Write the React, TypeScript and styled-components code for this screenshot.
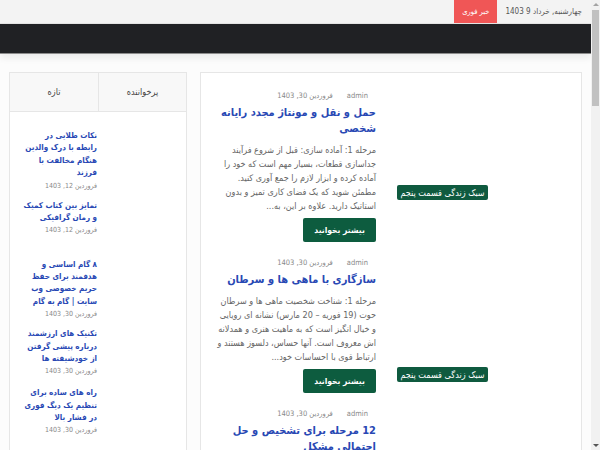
import React from 'react';
import styled, { createGlobalStyle } from 'styled-components';

const GlobalStyle = createGlobalStyle`
  html {
    direction: rtl;
  }
  body {
    margin: 0;
    padding-right: 9px;
    background: #fcfcfc;
    font-family: 'DejaVu Sans Condensed', 'DejaVu Sans', sans-serif;
    font-stretch: condensed;
    color: #555;
  }
`;

const ScrollTrack = styled.div`
  position: fixed;
  top: 0;
  right: 0;
  width: 9px;
  height: 100vh;
  background: #f1f1f1;
  display: flex;
  flex-direction: column;
  align-items: center;
  justify-content: space-between;
`;

const ScrollArrow = styled.span<{ $down?: boolean }>`
  margin: 3px 0;
  width: 0;
  height: 0;
  border-left: 3px solid transparent;
  border-right: 3px solid transparent;
  border-top: ${(p) => (p.$down ? '3px solid #555' : 'none')};
  border-bottom: ${(p) => (p.$down ? 'none' : '3px solid #a3a3a3')};
`;

const ScrollThumb = styled.div`
  position: absolute;
  top: 10px;
  right: 1px;
  width: 7px;
  height: 96px;
  background: #c1c1c1;
`;

const TopBar = styled.div`
  height: 23px;
  background: #f3f3f3;
  border-bottom: 1px solid #e4e4e4;
  display: flex;
  align-items: center;
  gap: 8px;
  padding-right: 9px;
`;

const DateText = styled.span`
  font-size: 8px;
  color: #555;
`;

const Breaking = styled.span`
  height: 23px;
  display: flex;
  align-items: center;
  padding: 0 8px;
  background: #f05656;
  color: #fff;
  font-size: 7.5px;
`;

const NavBar = styled.div`
  height: 29px;
  background: #202124;
  border-bottom: 1px solid #8c8c8c;
  box-shadow: 0 4px 7px rgba(0, 0, 0, 0.07);
`;

const Layout = styled.div`
  display: grid;
  grid-template-columns: 382px 178px;
  gap: 13px;
  padding: 18px 9px 30px;
  align-items: start;
`;

const Card = styled.div`
  background: #fff;
  border: 1px solid #e6e6e6;
`;

const MainCard = styled(Card)`
  padding: 17px 17px 20px 15px;
  display: flex;
  flex-direction: column;
  gap: 15px;
`;

const PostRow = styled.article`
  display: flex;
  gap: 12px;
`;

const Thumb = styled.div<{ $offset: number }>`
  flex: 0 0 176px;
  align-self: flex-end;
  display: flex;
  justify-content: flex-end;
  padding-bottom: ${(p) => p.$offset}px;
`;

const Badge = styled.span`
  flex: 0 0 91px;
  margin-left: 9px;
  height: 15px;
  display: flex;
  align-items: center;
  justify-content: center;
  background: #0f5a3f;
  border-radius: 2px;
  color: #fff;
  font-size: 9px;
  white-space: nowrap;
`;

const PostBody = styled.div`
  flex: 0 0 160px;
  display: flex;
  flex-direction: column;
  align-items: flex-start;
`;

const Meta = styled.div`
  display: flex;
  gap: 14px;
  padding-right: 8px;
  font-size: 7.5px;
  line-height: 12px;
  color: #888;
`;

const PostTitle = styled.h2`
  margin: 3px 0 0;
  font-size: 11px;
  line-height: 16px;
  font-weight: bold;
  color: #2848b4;
`;

const Excerpt = styled.p`
  margin: 6px 0 0;
  font-size: 9px;
  line-height: 14px;
  color: #666;
`;

const ReadMore = styled.button`
  margin-top: 5px;
  width: 73px;
  height: 24px;
  border: none;
  border-radius: 2px;
  background: #0d5c3f;
  color: #fff;
  font-family: inherit;
  font-size: 8.5px;
  font-weight: bold;
`;

const Tabs = styled.div`
  display: grid;
  grid-template-columns: 1fr 1fr;
  background: #f8f8f8;
  border-bottom: 1px solid #e6e6e6;
`;

const Tab = styled.div<{ $first?: boolean }>`
  height: 38px;
  display: flex;
  align-items: center;
  justify-content: center;
  font-size: 9px;
  color: #444;
  border-left: ${(p) => (p.$first ? '1px solid #e6e6e6' : 'none')};
`;

const SideList = styled.div`
  padding: 18px 16px 20px 13px;
  display: flex;
  flex-direction: column;
  gap: 8px;
`;

const SideItem = styled.div`
  display: flex;
  gap: 8px;
  min-height: 51px;
`;

const SideThumb = styled.div`
  width: 65px;
  flex-shrink: 0;
`;

const SideText = styled.div`
  flex: 1;
`;

const SideTitle = styled.div`
  font-size: 8px;
  line-height: 12.4px;
  font-weight: bold;
  color: #2848b4;
`;

const SideDate = styled.div`
  margin-top: 1px;
  font-size: 7px;
  line-height: 11px;
  color: #888;
`;

const posts = [
  {
    title: 'حمل و نقل و مونتاژ مجدد رایانه شخصی',
    excerpt:
      'مرحله 1: آماده سازی: قبل از شروع فرآیند جداسازی قطعات، بسیار مهم است که خود را آماده کرده و ابزار لازم را جمع آوری کنید. مطمئن شوید که یک فضای کاری تمیز و بدون استاتیک دارید. علاوه بر این، به...',
    offset: 42,
  },
  {
    title: 'سازگاری با ماهی ها و سرطان',
    excerpt:
      'مرحله 1: شناخت شخصیت ماهی ها و سرطان حوت (19 فوریه – 20 مارس) نشانه ای رویایی و خیال انگیز است که به ماهیت هنری و همدلانه اش معروف است. آنها حساس، دلسوز هستند و ارتباط قوی با احساسات خود...',
    offset: 11,
  },
  {
    title: '12 مرحله برای تشخیص و حل احتمالی مشکل',
    excerpt:
      'مرحله 1: شناسایی مشکل اولین قدم در حل هر مشکلی، شناسایی دقیق آن است. زمانی را صرف درک ماهیت مشکل کنید و علائم آن را به دقت بررسی کنید تا بتوانید...',
    offset: 11,
  },
  {
    title: 'راهنمای کامل نگهداری از گیاهان آپارتمانی',
    excerpt:
      'مرحله 1: انتخاب گیاه مناسب برای فضای خانه بسیار مهم است. نور، رطوبت و دمای محیط را در نظر بگیرید و گیاهی را انتخاب کنید که با شرایط خانه شما سازگار باشد...',
    offset: 11,
  },
];

const sidePosts = [
  { title: 'نکات طلایی در رابطه با درک والدین هنگام مخالفت با فرزند', date: 'فروردین 12, 1403' },
  { title: 'تمایز بین کتاب کمیک و رمان گرافیکی', date: 'فروردین 12, 1403' },
  { title: '۸ گام اساسی و هدفمند برای حفظ حریم خصوصی وب سایت | گام به گام', date: 'فروردین 30, 1403' },
  { title: 'تکنیک های ارزشمند درباره پیشی گرفتن از خودشیفته ها', date: 'فروردین 30, 1403' },
  { title: 'راه های ساده برای تنظیم یک دیگ فوری در فشار بالا', date: 'فروردین 30, 1403' },
];

export default function App() {
  return (
    <>
      <GlobalStyle />
      <TopBar>
        <DateText>چهارشنبه, خرداد 9 1403</DateText>
        <Breaking>خبر فوری</Breaking>
      </TopBar>
      <NavBar />
      <Layout>
        <MainCard>
          {posts.map((post) => (
            <PostRow key={post.title}>
              <Thumb $offset={post.offset}>
                <Badge>سبک زندگی قسمت پنجم</Badge>
              </Thumb>
              <PostBody>
                <Meta>
                  <span>admin</span>
                  <span>فروردین 30, 1403</span>
                </Meta>
                <PostTitle>{post.title}</PostTitle>
                <Excerpt>{post.excerpt}</Excerpt>
                <ReadMore>بیشتر بخوانید</ReadMore>
              </PostBody>
            </PostRow>
          ))}
        </MainCard>
        <Card>
          <Tabs>
            <Tab $first>پرخواننده</Tab>
            <Tab>تازه</Tab>
          </Tabs>
          <SideList>
            {sidePosts.map((item) => (
              <SideItem key={item.title}>
                <SideThumb />
                <SideText>
                  <SideTitle>{item.title}</SideTitle>
                  <SideDate>{item.date}</SideDate>
                </SideText>
              </SideItem>
            ))}
          </SideList>
        </Card>
      </Layout>
      <ScrollTrack>
        <ScrollArrow />
        <ScrollThumb />
        <ScrollArrow $down />
      </ScrollTrack>
    </>
  );
}
